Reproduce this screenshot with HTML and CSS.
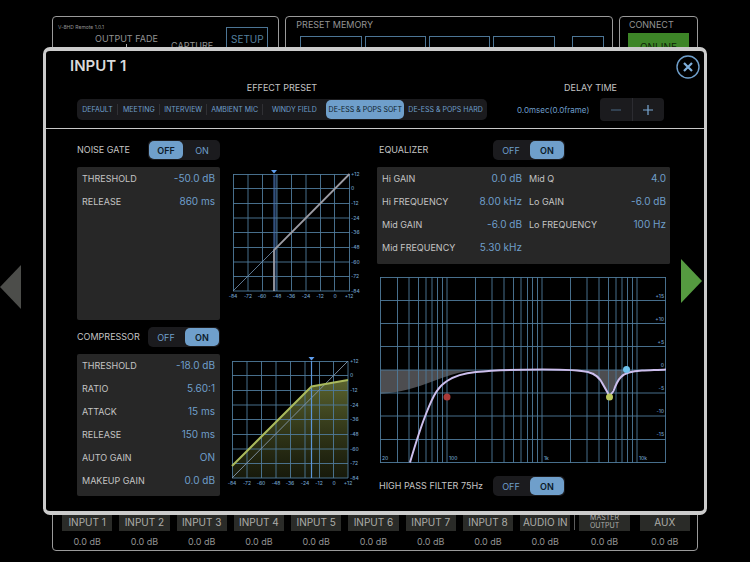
FILE: index.html
```html
<!DOCTYPE html>
<html lang="en">
<head>
    <meta charset="UTF-8">
    <meta name="viewport" content="width=device-width, initial-scale=1.0">
    <title>V-8HD Remote</title>
    <link rel="stylesheet" href="styles.css">
</head>
<body>

<main class="mixer">
    <div class="top-row">
        <section class="panel output-panel">
            <span class="version">V-8HD Remote 1.0.1</span>
            <div class="output-row">
                <div class="fade">OUTPUT FADE<span class="fade-tick"></span></div>
                <div class="capture">CAPTURE</div>
                <button type="button" class="outline-button setup">SETUP</button>
            </div>
        </section>
        <section class="panel memory-panel">
            <h2>PRESET MEMORY</h2>
            <div class="memory-buttons">
                <button type="button" class="outline-button">1</button>
                <button type="button" class="outline-button">2</button>
                <button type="button" class="outline-button">3</button>
                <button type="button" class="outline-button">4</button>
                <button type="button" class="outline-button next" aria-label="More presets"></button>
            </div>
        </section>
        <section class="panel connect-panel">
            <h2>CONNECT</h2>
            <button type="button" class="online">ONLINE</button>
        </section>
    </div>

    <section class="panel channels">
        <div class="channel"><button type="button">INPUT 1</button><span>0.0 dB</span></div>
        <div class="channel"><button type="button">INPUT 2</button><span>0.0 dB</span></div>
        <div class="channel"><button type="button">INPUT 3</button><span>0.0 dB</span></div>
        <div class="channel"><button type="button">INPUT 4</button><span>0.0 dB</span></div>
        <div class="channel"><button type="button">INPUT 5</button><span>0.0 dB</span></div>
        <div class="channel"><button type="button">INPUT 6</button><span>0.0 dB</span></div>
        <div class="channel"><button type="button">INPUT 7</button><span>0.0 dB</span></div>
        <div class="channel"><button type="button">INPUT 8</button><span>0.0 dB</span></div>
        <div class="channel"><button type="button">AUDIO IN</button><span>0.0 dB</span></div>
        <div class="divider"></div>
        <div class="channel master"><button type="button">MASTER OUTPUT</button><span>0.0 dB</span></div>
        <div class="channel aux"><button type="button">AUX</button><span>0.0 dB</span></div>
    </section>
</main>

<button type="button" class="arrow arrow-prev" aria-label="Previous channel"></button>

<div class="dialog" role="dialog" aria-labelledby="dialog-title">
    <header class="dialog-header">
        <h1 id="dialog-title">INPUT 1</h1>
        <button type="button" class="close" aria-label="Close">
            <svg viewBox="0 0 24 24">
                <circle cx="12" cy="12" r="11" fill="none" stroke="#6f9fcb" stroke-width="1.4"/>
                <path d="M8 8L16 16M16 8L8 16" stroke="#7fb0dc" stroke-width="2.2"/>
            </svg>
        </button>
        <div class="header-row">
            <div class="presets">
                <h2>EFFECT PRESET</h2>
                <div class="segments preset-segments">
                    <button type="button">DEFAULT</button>
                    <button type="button">MEETING</button>
                    <button type="button">INTERVIEW</button>
                    <button type="button">AMBIENT MIC</button>
                    <button type="button">WINDY FIELD</button>
                    <button type="button" class="active">DE-ESS &amp; POPS SOFT</button>
                    <button type="button">DE-ESS &amp; POPS HARD</button>
                </div>
            </div>
            <div class="delay">
                <h2>DELAY TIME</h2>
                <div class="delay-row">
                    <span class="delay-value">0.0msec(0.0frame)</span>
                    <div class="stepper">
                        <button type="button" aria-label="Decrease delay">
                            <svg viewBox="0 0 12 12"><path d="M1 6H11" stroke="#4b6883"/></svg>
                        </button>
                        <button type="button" aria-label="Increase delay">
                            <svg viewBox="0 0 12 12"><path d="M1 6H11M6 1V11" stroke="#7aa9d4" stroke-width="1.2"/></svg>
                        </button>
                    </div>
                </div>
            </div>
        </div>
    </header>

    <div class="dialog-body">
        <div class="dynamics">
            <section class="effect gate">
                <div class="controls">
                    <div class="effect-head">
                        <h3>NOISE GATE</h3>
                        <div class="segments switch">
                            <button type="button" class="active">OFF</button>
                            <button type="button">ON</button>
                        </div>
                    </div>
                    <dl class="params">
                        <div><dt>THRESHOLD</dt><dd>-50.0 dB</dd></div>
                        <div><dt>RELEASE</dt><dd>860 ms</dd></div>
                    </dl>
                </div>
                <svg class="graph" viewBox="0 0 137 132">
                    <rect x="44" y="6" width="3" height="117" fill="#1c2e4a"/>
                    <path class="grid" d="M3.5 6V123M18 6V123M32.5 6V123M47 6V123M61.5 6V123M76 6V123M90.5 6V123M104.5 6V123M119.5 6V123M3 6.5H120M3 20.5H120M3 35.5H120M3 50H120M3 64.5H120M3 79.5H120M3 94H120M3 108.5H120M3 123H120"/>
                    <path d="M3 123L44 82" stroke="#7393b3" stroke-width="0.8"/>
                    <path d="M44 6V82" stroke="#4670b0" stroke-width="1"/>
                    <path d="M44 123V82L119.5 6" fill="none" stroke="#9c9ca4" stroke-width="1.8"/>
                    <path d="M41 2H47L44 5.5Z" fill="#5f9ff0"/>
                    <g class="scale">
                        <text x="121" y="8">+12</text><text x="121" y="22">0</text><text x="121" y="37">-12</text>
                        <text x="121" y="52">-24</text><text x="121" y="66">-36</text><text x="121" y="81">-48</text>
                        <text x="121" y="96">-60</text><text x="121" y="110">-72</text><text x="121" y="125">-84</text>
                    </g>
                    <g class="scale centered">
                        <text x="3" y="130">-84</text><text x="18" y="130">-72</text><text x="32" y="130">-60</text>
                        <text x="47" y="130">-48</text><text x="61" y="130">-36</text><text x="76" y="130">-24</text>
                        <text x="90" y="130">-12</text><text x="105" y="130">0</text><text x="119" y="130">+12</text>
                    </g>
                </svg>
            </section>

            <section class="effect">
                <div class="controls">
                    <div class="effect-head">
                        <h3>COMPRESSOR</h3>
                        <div class="segments switch">
                            <button type="button">OFF</button>
                            <button type="button" class="active">ON</button>
                        </div>
                    </div>
                    <dl class="params">
                        <div><dt>THRESHOLD</dt><dd>-18.0 dB</dd></div>
                        <div><dt>RATIO</dt><dd>5.60:1</dd></div>
                        <div><dt>ATTACK</dt><dd>15 ms</dd></div>
                        <div><dt>RELEASE</dt><dd>150 ms</dd></div>
                        <div><dt>AUTO GAIN</dt><dd>ON</dd></div>
                        <div><dt>MAKEUP GAIN</dt><dd>0.0 dB</dd></div>
                    </dl>
                </div>
                <svg class="graph" viewBox="0 0 137 132">
                    <defs>
                        <linearGradient id="comp-fill" x1="0" y1="0" x2="0" y2="1">
                            <stop offset="0" stop-color="#8c9a48" stop-opacity="0.65"/>
                            <stop offset="1" stop-color="#4c5424" stop-opacity="0.3"/>
                        </linearGradient>
                    </defs>
                    <path d="M2 111L81.5 31.5L118 25V123H2Z" fill="url(#comp-fill)"/>
                    <path class="grid" d="M2.5 6V123M17 6V123M31.5 6V123M46 6V123M60.5 6V123M75 6V123M89.5 6V123M103.5 6V123M118 6V123M2 6.5H118M2 20.5H118M2 35.5H118M2 50H118M2 64.5H118M2 79.5H118M2 94H118M2 108.5H118M2 123H118"/>
                    <path d="M2 123L118 6" stroke="#8698ae" stroke-width="0.9"/>
                    <path d="M81.5 6V123" stroke="#5b95d8" stroke-width="1.2"/>
                    <path d="M2 111L81.5 31.5L118 25" fill="none" stroke="#a9b95c" stroke-width="2"/>
                    <path d="M78.5 2H84.5L81.5 5.5Z" fill="#5f9ff0"/>
                    <g class="scale">
                        <text x="120" y="8">+12</text><text x="120" y="22">0</text><text x="120" y="37">-12</text>
                        <text x="120" y="52">-24</text><text x="120" y="66">-36</text><text x="120" y="81">-48</text>
                        <text x="120" y="96">-60</text><text x="120" y="110">-72</text><text x="120" y="125">-84</text>
                    </g>
                    <g class="scale centered">
                        <text x="2" y="130">-84</text><text x="17" y="130">-72</text><text x="31" y="130">-60</text>
                        <text x="46" y="130">-48</text><text x="60" y="130">-36</text><text x="75" y="130">-24</text>
                        <text x="89" y="130">-12</text><text x="104" y="130">0</text><text x="118" y="130">+12</text>
                    </g>
                </svg>
            </section>
        </div>

        <section class="equalizer">
            <div class="effect-head">
                <h3>EQUALIZER</h3>
                <div class="segments switch">
                    <button type="button">OFF</button>
                    <button type="button" class="active">ON</button>
                </div>
            </div>
            <div class="eq-params">
                <dl class="params">
                    <div><dt>Hi GAIN</dt><dd>0.0 dB</dd></div>
                    <div><dt>Hi FREQUENCY</dt><dd>8.00 kHz</dd></div>
                    <div><dt>Mid GAIN</dt><dd>-6.0 dB</dd></div>
                    <div><dt>Mid FREQUENCY</dt><dd>5.30 kHz</dd></div>
                </dl>
                <dl class="params">
                    <div><dt>Mid Q</dt><dd>4.0</dd></div>
                    <div><dt>Lo GAIN</dt><dd>-6.0 dB</dd></div>
                    <div><dt>Lo FREQUENCY</dt><dd>100 Hz</dd></div>
                </dl>
            </div>
            <svg class="eq-graph" viewBox="0 0 286 186">
                <path d="M0 93H96C62 96 42 114 0 117Z" fill="#4d4d50"/>
                <path d="M205 93C220 96 222 108 229.5 119C236 108 238 96 253 93Z" fill="#4d4d50"/>
                <path class="grid" d="M0.5 0V186M17.5 0V186M29 0V186M38.5 0V186M46 0V186M52 0V186M57.5 0V186M62.5 0V186M67 0V186M95.5 0V186M112 0V186M124 0V186M133.5 0V186M141 0V186M147.5 0V186M152.5 0V186M157.5 0V186M162 0V186M190.5 0V186M207 0V186M219 0V186M228.5 0V186M236 0V186M242 0V186M247.5 0V186M252.5 0V186M257 0V186M285.5 0V186"/>
                <path class="grid" d="M0 0.5H286M0 23.5H286M0 46.5H286M0 69.5H286M0 93H286M0 116H286M0 139H286M0 162.5H286M0 185.5H286"/>
                <path class="curve" d="M30 185.5C36 165 42 147 46 137C54 116 59 109 67 104C76 98 86 96 96 95C120 92.5 140 92.5 163 92.5C185 92.5 200 93 208 95C216 97 220 101 223 107.5L229.5 119L233.5 114C236 107 238 103 241 100C245 95.5 252 94 262 93.5C270 93 278 93 286 92.5"/>
                <circle cx="67" cy="120" r="3.5" fill="#a93a38"/>
                <circle cx="229.5" cy="120" r="3.5" fill="#bcc75f"/>
                <circle cx="246.5" cy="92.5" r="3.5" fill="#6fc3ee"/>
                <g class="scale right">
                    <text x="284" y="21">+15</text><text x="284" y="44">+10</text><text x="284" y="67">+5</text>
                    <text x="284" y="90">0</text><text x="284" y="113">-5</text><text x="284" y="136">-10</text>
                    <text x="284" y="159">-15</text>
                </g>
                <g class="scale">
                    <text x="2" y="183">20</text><text x="69" y="183">100</text><text x="164" y="183">1k</text>
                    <text x="259" y="183">10k</text>
                </g>
            </svg>
            <div class="effect-head">
                <h3>HIGH PASS FILTER 75Hz</h3>
                <div class="segments switch">
                    <button type="button">OFF</button>
                    <button type="button" class="active">ON</button>
                </div>
            </div>
        </section>
    </div>
    <button type="button" class="arrow arrow-next" aria-label="Next channel"></button>
</div>

</body>
</html>
```
FILE: styles.css
```css
* {
    box-sizing: border-box;
}

html,
body {
    height: 100%;
}

body {
    margin: 0;
    position: relative;
    min-height: 562px;
    background-color: #000;
    color: #c4c4c4;
    font-family: Inter, "Liberation Sans", sans-serif;
    font-size: 10px;
}

h1,
h2,
h3,
dl,
dd {
    margin: 0;
    font-weight: normal;
}

button {
    margin: 0;
    padding: 0;
    border: none;
    background: none;
    color: #6f9fcb;
    font-family: inherit;
    white-space: nowrap;
    cursor: pointer;
}

svg {
    display: block;
    overflow: visible;
}

/* mixer behind the dialog */
.mixer {
    height: 100%;
    padding: 16px 52px 11px;
    display: flex;
    flex-direction: column;
    gap: 6px;
}

.panel {
    border: 1px solid #9a9a9a;
    border-radius: 4px;
    color: #939393;
}

.panel h2 {
    font-size: 9px;
    line-height: 14px;
}

.top-row {
    display: grid;
    grid-template-columns: 227fr 327fr 79fr;
    gap: 6px;
    height: 120px;
}

.output-panel {
    padding: 7px 10px 0 5px;
    display: flex;
    flex-direction: column;
}

.version {
    font-size: 5px;
    line-height: 6px;
}

.output-row {
    display: flex;
    justify-content: space-between;
    padding-left: 37px;
    margin-top: -3px;
    font-size: 9px;
}

.fade {
    display: flex;
    flex-direction: column;
    align-items: center;
    padding-top: 6px;
    line-height: 11px;
}

.fade-tick {
    width: 1px;
    height: 20px;
    background-color: #b0b0b0;
}

.capture {
    padding-top: 13px;
    line-height: 12px;
}

.outline-button {
    border: 1px solid #4c7595;
    color: #55809f;
    font-size: 13px;
}

.setup {
    width: 42px;
    height: 24px;
    font-size: 10px;
}

.memory-panel {
    padding: 1px 8px 0 14px;
}

.memory-panel h2 {
    margin-left: -4px;
}

.memory-buttons {
    display: flex;
    gap: 3px;
    margin-top: 4px;
}

.memory-buttons .outline-button {
    flex: 61;
    height: 32px;
}

.memory-buttons .next {
    flex: 31;
    margin-left: 14px;
}

.connect-panel {
    padding: 1px 8px 0;
}

.connect-panel h2 {
    padding-left: 1px;
}

.online {
    width: 100%;
    height: 27px;
    margin-top: 1px;
    background-color: #3d8527;
    color: #0d2208;
    font-size: 10px;
}

.channels {
    flex: 1;
    padding: 0 7px 2px 9px;
    display: flex;
    align-items: flex-end;
    gap: 7px;
}

.channel {
    flex: 1;
    min-width: 0;
    display: flex;
    flex-direction: column;
    align-items: center;
    font-size: 9px;
    line-height: 12px;
    gap: 5px;
}

.channel button {
    width: 100%;
    height: 18px;
    background-color: #2a2b28;
    color: #adada8;
    font-size: 10px;
}

.channels .divider {
    width: 1px;
    height: 35px;
    margin: 0 -3px 0 -3px;
    border-top: 17px solid #5c5c5c;
}

.channel.master button {
    font-size: 7px;
    line-height: 8px;
    white-space: normal;
}

.aux {
    margin-left: 3px;
}

/* dialog */
.dialog {
    position: absolute;
    top: 47px;
    right: 43px;
    bottom: 47px;
    left: 43px;
    display: flex;
    flex-direction: column;
    background-color: #000;
    border: 4px solid #cbcbcb;
    border-right-width: 3px;
    border-left-width: 3px;
    border-radius: 7px;
}

.dialog-header {
    display: flex;
    flex-wrap: wrap;
    justify-content: space-between;
    padding: 4px 4px 7px 24px;
    border-bottom: 1px solid #c8c8c8;
}

.dialog-header h1 {
    font-size: 15px;
    font-weight: 600;
    line-height: 22px;
    color: #dadada;
}

.close {
    width: 24px;
    height: 24px;
}

.header-row {
    flex: 1 0 100%;
    display: flex;
    justify-content: space-between;
    gap: 30px;
    padding: 3px 36px 0 7px;
}

.header-row h2 {
    font-size: 9px;
    line-height: 12px;
    text-align: center;
}

.presets {
    flex: 410;
}

.delay {
    flex: 147;
}

.segments {
    display: grid;
    background-color: #1b1b1e;
    border-radius: 5px;
}

.segments button {
    border-radius: 5px;
}

.segments .active {
    background-color: #6f9fcb;
    color: #0c1a28;
}

.preset-segments {
    grid-template-columns: 41fr 42fr 47fr 56fr 64fr 78fr 83fr;
    height: 21px;
    margin-top: 5px;
}

.preset-segments button {
    min-width: 0;
    font-size: 7px;
    background-image: linear-gradient(#303034, #303034);
    background-size: 1px 11px;
    background-position: right center;
    background-repeat: no-repeat;
}

.preset-segments .active,
.preset-segments button:last-child,
.preset-segments button:nth-child(5) {
    background-image: none;
}

.preset-segments .active {
    margin: 1px 0;
}

.delay-row {
    display: flex;
    align-items: center;
    justify-content: space-between;
    margin-top: 4px;
}

.delay-value {
    color: #6f9fcb;
    font-size: 8px;
}

.stepper {
    width: 64px;
    height: 23px;
    display: flex;
    background-color: #1b1b1e;
    border-radius: 4px;
}

.stepper button {
    flex: 1;
    display: flex;
    align-items: center;
    justify-content: center;
}

.stepper svg {
    width: 12px;
    height: 12px;
}

.stepper button + button {
    border-left: 1px solid #2c2c31;
}

.dialog-body {
    flex: 1;
    display: grid;
    grid-template-columns: 290fr 293fr;
    gap: 10px;
    padding: 11px 34px 15px 31px;
}

.dynamics {
    display: flex;
    flex-direction: column;
    gap: 7px;
}

.effect {
    display: grid;
    grid-template-columns: 143fr 137fr;
    gap: 10px;
}

.controls {
    display: flex;
    flex-direction: column;
    gap: 7px;
}

.effect-head {
    display: flex;
    align-items: center;
    justify-content: space-between;
    height: 20px;
}

.effect-head h3 {
    font-size: 9px;
    line-height: 12px;
}

.switch {
    grid-template-columns: 1fr 1fr;
    width: 72px;
    height: 20px;
}

.switch button {
    font-size: 9px;
}

.switch .active {
    margin: 1px;
    font-weight: 600;
}

.params {
    flex: 1;
    padding: 0 5px 4px;
    background-color: #272727;
    border-radius: 2px;
}

.params div {
    display: flex;
    justify-content: space-between;
    line-height: 23px;
}

.params dt {
    font-size: 9px;
}

.params dd {
    color: #6f9fcb;
    font-size: 10px;
}

.gate .params {
    min-height: 153px;
}

.graph {
    width: 100%;
    margin-top: 28px;
}

.grid {
    fill: none;
    stroke: #4f7a9b;
    stroke-width: 0.9;
}

.curve {
    fill: none;
    stroke: #cdbfed;
    stroke-width: 2;
}

.scale {
    fill: #6f9fc6;
    font-size: 5px;
    font-weight: 500;
}

.centered {
    text-anchor: middle;
}

.right {
    text-anchor: end;
}

.equalizer {
    display: flex;
    flex-direction: column;
}

.equalizer .effect-head {
    padding: 0 105px 0 2px;
}

.eq-params {
    display: grid;
    grid-template-columns: 149fr 144fr;
    margin-top: 7px;
    background-color: #272727;
    border-radius: 2px;
}

.eq-params .params {
    padding: 0 4px 5px 5px;
}

.eq-params .params + .params {
    padding-left: 3px;
}

.eq-graph {
    margin: 13px 4px 13px 3px;
}

.arrow {
    position: absolute;
    width: 21px;
    height: 44px;
}

.arrow-prev {
    left: 0;
    top: 265px;
    background-color: #4c4d4a;
    clip-path: polygon(0 50%, 100% 0, 100% 100%);
}

.arrow-next {
    right: 2px;
    top: 208px;
    background-color: #559a40;
    clip-path: polygon(0 0, 100% 50%, 0 100%);
}
```
